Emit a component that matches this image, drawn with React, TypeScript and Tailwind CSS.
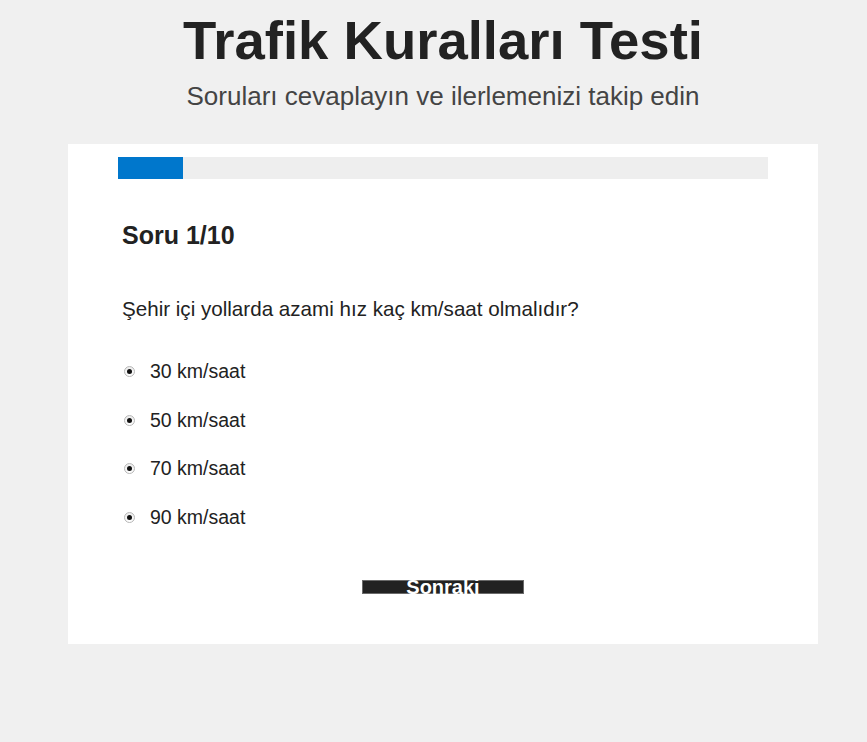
import React from 'react';

const options = ['30 km/saat', '50 km/saat', '70 km/saat', '90 km/saat'];

function RadioDot() {
  return (
    <span className="flex h-[11px] w-[11px] shrink-0 items-center justify-center rounded-full border border-[#b8b8b8] bg-gradient-to-b from-[#ececec] to-[#ffffff]">
      <span className="h-[5px] w-[5px] rounded-full bg-[#111111]" />
    </span>
  );
}

export default function App() {
  return (
    <div className="min-h-[742px] bg-[#f0f0f0] pl-[19px] font-['Liberation_Sans',Arial,sans-serif] text-[#222222]">
      {/* Header */}
      <header className="pt-[10px] text-center">
        <h1 className="text-[54.5px] font-bold leading-[62px]">Trafik Kuralları Testi</h1>
        <p className="mt-[9px] text-[26px] leading-[30px] text-[#444444]">
          Soruları cevaplayın ve ilerlemenizi takip edin
        </p>
      </header>

      {/* Quiz card */}
      <main className="mx-auto mt-[33px] w-[750px] bg-white px-[50px] pt-[13px] pb-[50px]">
        <div className="h-[22px] w-full bg-[#eeeeee]">
          <div className="h-full w-[10%] bg-[#0077cc]" />
        </div>

        <div className="px-[4px]">
          <h2 className="mt-[42px] text-[25px] font-bold leading-[29px]">Soru 1/10</h2>
          <p className="mt-[47px] text-[20.6px] leading-[23px]">
            Şehir içi yollarda azami hız kaç km/saat olmalıdır?
          </p>

          <div className="mt-[40px] flex flex-col gap-[25.7px]">
            {options.map((o) => (
              <label key={o} className="flex items-center gap-[15px] pl-[2px] text-[19.5px] leading-[23px]">
                <RadioDot />
                <span>{o}</span>
              </label>
            ))}
          </div>
        </div>

        <div className="mt-[50.5px] flex justify-center">
          <button className="h-[14px] w-[162px] overflow-visible border border-[#6a6a6a] bg-[#222222] p-0 text-[20px] font-bold leading-[12px] text-white">
            Sonraki
          </button>
        </div>
      </main>
    </div>
  );
}
